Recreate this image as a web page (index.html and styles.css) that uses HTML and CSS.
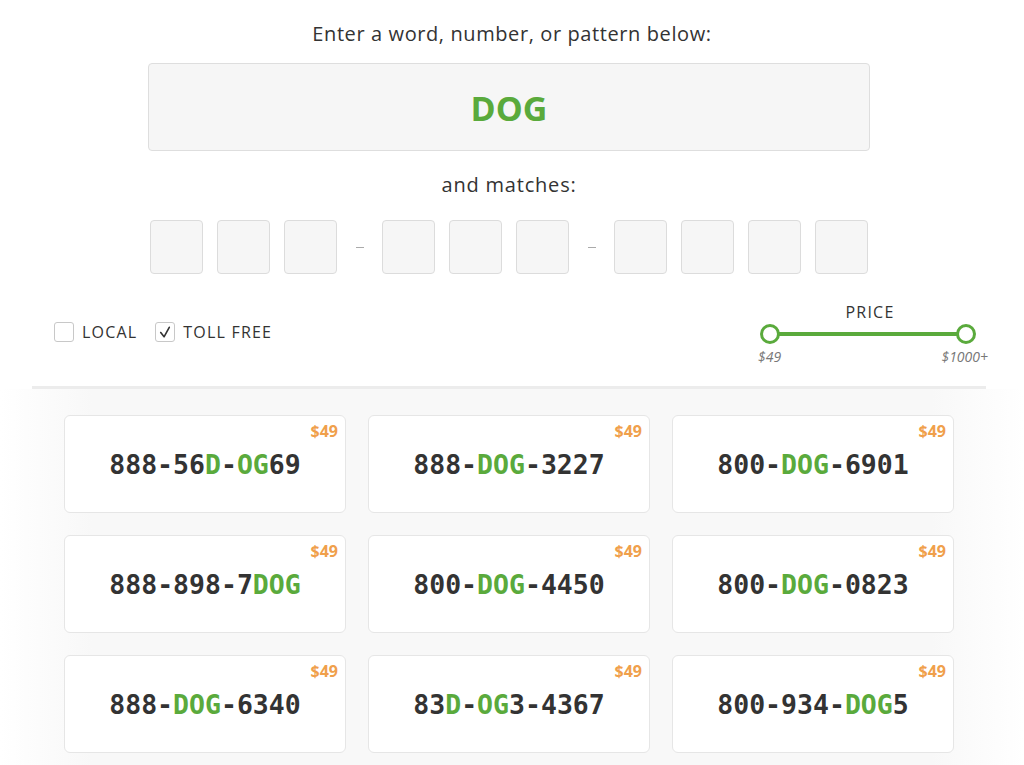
FILE: index.html
```html
<!DOCTYPE html>
<html>
<head>
<meta charset="utf-8">
<link rel="stylesheet" href="styles.css">
</head>
<body>
<section class="search">
  <p class="prompt">Enter a word, number, or pattern below:</p>
  <div class="word-input">DOG</div>
  <p class="and">and matches:</p>
  <div class="digits">
    <span class="digit"></span><span class="digit"></span><span class="digit"></span>
    <span class="dash"></span>
    <span class="digit"></span><span class="digit"></span><span class="digit"></span>
    <span class="dash"></span>
    <span class="digit"></span><span class="digit"></span><span class="digit"></span><span class="digit"></span>
  </div>
</section>

<section class="filters">
  <div class="types">
    <label class="check"><span class="box"></span>LOCAL</label>
    <label class="check"><span class="box"><svg width="19" height="19" viewBox="0 0 19 19"><polyline points="5,9.5 8.5,14 14,4" fill="none" stroke="#333" stroke-width="1.7" stroke-linecap="round" stroke-linejoin="round"/></svg></span>TOLL FREE</label>
  </div>
  <div class="price">
    <div class="price-title">PRICE</div>
    <div class="slider">
      <span class="track"></span>
      <span class="knob knob-left"></span>
      <span class="knob knob-right"></span>
    </div>
    <div class="price-labels"><span>$49</span><span>$1000+</span></div>
  </div>
</section>

<div class="divider"></div>

<section class="results">
  <div class="grid">
    <div class="card"><span class="cost">$49</span><span class="num">888-56<b>D</b>-<b>OG</b>69</span></div>
    <div class="card"><span class="cost">$49</span><span class="num">888-<b>DOG</b>-3227</span></div>
    <div class="card"><span class="cost">$49</span><span class="num">800-<b>DOG</b>-6901</span></div>
    <div class="card"><span class="cost">$49</span><span class="num">888-898-7<b>DOG</b></span></div>
    <div class="card"><span class="cost">$49</span><span class="num">800-<b>DOG</b>-4450</span></div>
    <div class="card"><span class="cost">$49</span><span class="num">800-<b>DOG</b>-0823</span></div>
    <div class="card"><span class="cost">$49</span><span class="num">888-<b>DOG</b>-6340</span></div>
    <div class="card"><span class="cost">$49</span><span class="num">83<b>D</b>-<b>OG</b>3-4367</span></div>
    <div class="card"><span class="cost">$49</span><span class="num">800-934-<b>DOG</b>5</span></div>
  </div>
</section>
</body>
</html>
```

FILE: styles.css
```css
* { box-sizing: border-box; }
html, body { margin: 0; padding: 0; background: #fff; }
body {
  width: 1024px;
  font-family: "Open Sans", "Lato", sans-serif;
  color: #333;
  overflow: hidden;
}

.search {
  display: flex;
  flex-direction: column;
  align-items: center;
}
.prompt {
  margin: 21px 0 0;
  font-size: 20px;
  line-height: 26px;
  letter-spacing: 0.6px;
  color: #333;
}
.word-input {
  margin-top: 16px;
  margin-left: -6px;
  width: 722px;
  height: 88px;
  background: #f6f6f6;
  border: 1px solid #dedede;
  border-radius: 4px;
  display: flex;
  align-items: center;
  justify-content: center;
  font-size: 34px;
  font-weight: 700;
  color: #5aaa3c;
  padding-top: 1px;
}
.and {
  margin: 21px 0 0;
  font-size: 20px;
  line-height: 26px;
  letter-spacing: 0.8px;
  margin-left: -6px;
}
.digits {
  margin-top: 22px;
  margin-left: -6px;
  display: flex;
  align-items: center;
  gap: 14px;
}
.digit {
  width: 53px;
  height: 54px;
  background: #f6f6f6;
  border: 1px solid #dcdcdc;
  border-radius: 4px;
}
.dash {
  width: 8px;
  height: 1px;
  background: #aaa;
  margin: 0 4.5px;
}

.filters {
  margin-top: 30px;
  padding: 0 34px 0 54px;
  display: flex;
  justify-content: space-between;
  align-items: center;
}
.types {
  display: flex;
  gap: 18px;
  margin-top: -4px;
}
.check {
  display: flex;
  align-items: center;
  gap: 8px;
  font-size: 16px;
  letter-spacing: 1.2px;
  color: #333;
}
.box {
  width: 20px;
  height: 20px;
  border: 1px solid #c8c8c8;
  border-radius: 3px;
  display: flex;
  align-items: center;
  justify-content: center;
  background: #fff;
}
.box svg { display: block; }

.price {
  width: 232px;
  display: flex;
  flex-direction: column;
}
.price-title {
  width: 216px;
  text-align: center;
  font-size: 16px;
  line-height: 16px;
  letter-spacing: 1.2px;
  padding-left: 8px;
}
.slider {
  position: relative;
  margin-top: 4px;
  margin-left: 2px;
  width: 216px;
  height: 20px;
}
.track {
  position: absolute;
  left: 10px;
  right: 10px;
  top: 8px;
  height: 4px;
  background: #5aaa3c;
}
.knob {
  position: absolute;
  top: 0;
  width: 20px;
  height: 20px;
  border-radius: 50%;
  border: 3px solid #5aaa3c;
  background: #fff;
}
.knob-left { left: 0; }
.knob-right { right: 0; }
.price-labels {
  margin-top: 5px;
  margin-right: 2px;
  display: flex;
  justify-content: space-between;
  font-size: 14px;
  line-height: 15px;
  font-style: italic;
  color: #777;
}

.divider {
  margin: 22px 38px 0 32px;
  height: 3px;
  background: #ececec;
}

.results {
  padding: 26px 0 40px;
  background: linear-gradient(to right, #fff 0%, #f8f8f8 9%, #f8f8f8 91%, #fff 100%);
}
.grid {
  width: 890px;
  margin-left: 64px;
  display: grid;
  grid-template-columns: repeat(3, 282px);
  gap: 22px 22px;
}
.card {
  position: relative;
  height: 98px;
  background: #fff;
  border: 1px solid #e6e6e6;
  border-radius: 6px;
  display: flex;
  align-items: center;
  justify-content: center;
  padding-top: 0;
}
.cost {
  position: absolute;
  top: 4px;
  right: 7px;
  font-size: 16px;
  font-weight: 700;
  color: #f0a04b;
}
.num {
  font-family: "DejaVu Sans Mono", "Liberation Mono", monospace;
  font-weight: 700;
  font-size: 26.5px;
  color: #333;
}
.num b {
  font-weight: 700;
  color: #5aaa3c;
}
```
